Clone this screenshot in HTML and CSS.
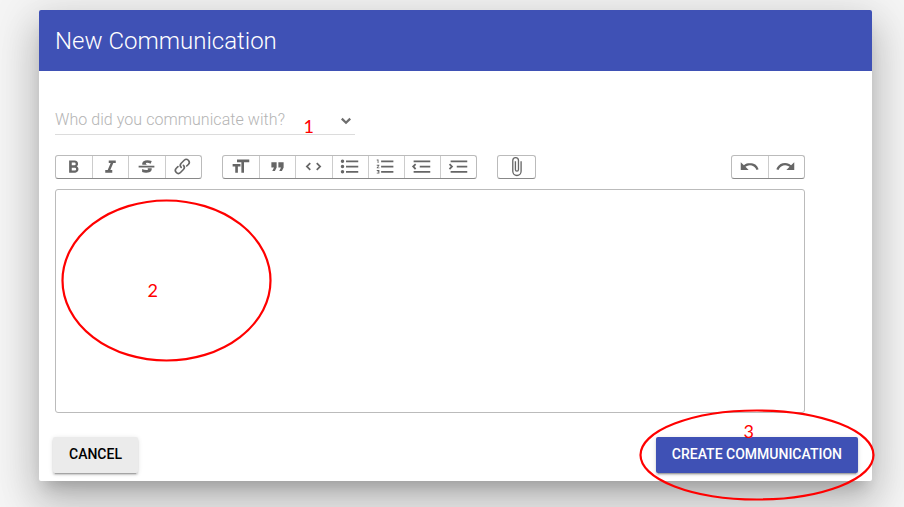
FILE: index.html
```html
<!DOCTYPE html>
<html lang="en">
<head>
<meta charset="utf-8">
<title>New Communication</title>
<link rel="stylesheet" href="styles.css">
</head>
<body>
<main class="dialog">
  <header class="header"><h1 class="title">New Communication</h1></header>
  <section class="content">
    <div class="select">
      <span class="placeholder">Who did you communicate with?</span>
      <svg class="chevron" viewBox="0 0 12 8"><path d="M1.8 1.6 6 5.7l4.200-4.100"/></svg>
    </div>
    <div class="toolbar">
      <div class="group">
        <button class="tool"><svg viewBox="0 0 24 24"><path d="M15.6 11.8c1-.7 1.6-1.8 1.6-2.8a4 4 0 0 0-4-4H7v14h7c2.1 0 3.700-1.700 3.700-3.800 0-1.500-.8-2.800-2.100-3.400zM10 7.500h3a1.500 1.500 0 1 1 0 3h-3v-3zm3.500 9H10v-3h3.500a1.500 1.500 0 1 1 0 3z"/></svg></button>
        <button class="tool"><svg viewBox="0 0 24 24"><path d="M10 5v3h2.200l-3.400 8H6v3h8v-3h-2.200l3.400-8H18V5h-8z"/></svg></button>
        <button class="tool"><svg viewBox="0 0 24 24"><path d="M12.730 14l.28.14c.26.15.45.3.57.44.12.14.18.3.18.5 0 .3-.15.56-.44.75-.3.2-.76.3-1.390.3A13.520 13.520 0 0 1 7 14.950v3.370a10.640 10.640 0 0 0 4.840.88c1.260 0 2.350-.19 3.280-.56.93-.37 1.640-.9 2.140-1.570s.74-1.450.74-2.320c0-.26-.02-.51-.06-.75h-5.210zm-5.500-4c-.08-.34-.12-.7-.12-1.100 0-1.290.52-2.300 1.580-3.020 1.050-.72 2.500-1.080 4.340-1.080 1.620 0 3.280.34 4.970 1l-1.300 2.930c-1.470-.6-2.730-.9-3.800-.9-.55 0-.96.08-1.200.26-.26.17-.38.38-.38.64 0 .27.16.52.48.74.17.12.53.3 1.050.53H7.230zM3 13h18v-2H3v2z"/></svg></button>
        <button class="tool"><svg viewBox="0 0 24 24"><path d="M9.880 13.700a4.300 4.300 0 0 1 0-6.070l3.370-3.370a4.260 4.260 0 0 1 6.070 0 4.300 4.300 0 0 1 0 6.060l-1.960 1.720a.91.91 0 1 1-1.300-1.300l1.970-1.710a2.460 2.460 0 0 0-3.480-3.480l-3.380 3.370a2.460 2.460 0 0 0 0 3.480.91.91 0 1 1-1.300 1.300z"/><path d="M4.250 19.460a4.300 4.300 0 0 1 0-6.070l1.930-1.900a.91.91 0 1 1 1.300 1.300l-1.930 1.900a2.460 2.460 0 0 0 3.480 3.480l3.370-3.380c.96-.96.96-2.520 0-3.480a.91.91 0 1 1 1.300-1.300 4.300 4.300 0 0 1 0 6.070l-3.380 3.380a4.260 4.260 0 0 1-6.070 0z"/></svg></button>
      </div>
      <div class="group">
        <button class="tool"><svg viewBox="0 0 24 24"><path d="M12 9v3H9v7H6v-7H3V9h9zM8 4h14v3h-6v12h-3V7H8V4z"/></svg></button>
        <button class="tool"><svg viewBox="0 0 24 24"><path d="M6 17h3l2-4V7H5v6h3zm8 0h3l2-4V7h-6v6h3z"/></svg></button>
        <button class="tool"><svg viewBox="0 0 24 24"><path d="M18.200 12L15 15.200l1.400 1.400L21 12l-4.600-4.600L15 8.800l3.200 3.200zM5.800 12L9 8.800 7.600 7.400 3 12l4.600 4.600L9 15.200 5.800 12z"/></svg></button>
        <button class="tool"><svg viewBox="0 0 24 24"><path d="M4 4a2 2 0 1 0 0 4 2 2 0 0 0 0-4zm0 6a2 2 0 1 0 0 4 2 2 0 0 0 0-4zm0 6a2 2 0 1 0 0 4 2 2 0 0 0 0-4zm4 3h14v-2H8v2zm0-6h14v-2H8v2zm0-8v2h14V5H8z"/></svg></button>
        <button class="tool"><svg viewBox="0 0 24 24"><path d="M2 17h2v.5H3v1h1v.5H2v1h3v-4H2v1zm1-9h1V4H2v1h1v3zm-1 3h1.800L2 13.100v.9h3v-1H3.200L5 10.900V10H2v1zm5-6v2h14V5H7zm0 14h14v-2H7v2zm0-6h14v-2H7v2z"/></svg></button>
        <button class="tool"><svg viewBox="0 0 24 24"><path d="M3 19h19v-2H3v2zm7-6h12v-2H10v2zm-8.300-.3l2.800 2.900L6 14.200 4 12l2-2-1.400-1.500L1 12l.7.7zM3 5v2h19V5H3z"/></svg></button>
        <button class="tool"><svg viewBox="0 0 24 24"><path d="M3 19h19v-2H3v2zm7-6h12v-2H10v2zm-6.900-1L1 14.200l1.400 1.400L6 12l-.7-.7-2.800-2.800L1 9.900 3.100 12zM3 5v2h19V5H3z"/></svg></button>
      </div>
      <div class="group">
        <button class="tool"><svg viewBox="0 0 24 24"><path d="M16.500 6v11.500a4 4 0 1 1-8 0V5a2.500 2.500 0 0 1 5 0v10.500a1 1 0 1 1-2 0V6H10v9.500a2.500 2.500 0 0 0 5 0V5a4 4 0 1 0-8 0v12.500a5.500 5.500 0 0 0 11 0V6h-1.500z"/></svg></button>
      </div>
      <div class="group history">
        <button class="tool"><svg viewBox="0 0 24 24"><path d="M12.500 8c-2.600 0-5 1-6.900 2.600L2 7v9h9l-3.600-3.600A8 8 0 0 1 20 16l2.400-.8a10.500 10.500 0 0 0-10-7.200z"/></svg></button>
        <button class="tool"><svg viewBox="0 0 24 24"><path d="M18.400 10.600a10.500 10.500 0 0 0-16.900 4.600L4 16a8 8 0 0 1 12.700-3.600L13 16h9V7l-3.600 3.600z"/></svg></button>
      </div>
    </div>
    <div class="editor" contenteditable="true"></div>
  </section>
  <footer class="actions">
    <button class="button">CANCEL</button>
    <button class="button primary">CREATE COMMUNICATION</button>
  </footer>
</main>
<svg class="annotations" viewBox="0 0 904 507">
  <ellipse cx="166.500" cy="280.500" rx="104" ry="80"/>
  <ellipse cx="757" cy="455" rx="116.500" ry="44.500"/>
  <text x="303.500" y="133">1</text>
  <text x="147.500" y="297">2</text>
  <text x="743.500" y="438">3</text>
</svg>
</body>
</html>
```
FILE: styles.css
```css
* { box-sizing: border-box; }

body {
  margin: 0;
  height: 507px;
  overflow: hidden;
  padding: 10px 32px 26px 39px;
  background: #f5f5f5;
  font-family: Roboto, sans-serif;
}

.dialog {
  height: 471px;
  display: flex;
  flex-direction: column;
  background: #fff;
  border-radius: 2px;
  box-shadow: 0 11px 15px -7px rgba(0, 0, 0, .2),
    0 24px 38px 3px rgba(0, 0, 0, .14),
    0 9px 46px 8px rgba(0, 0, 0, .12);
}

.header {
  height: 61px;
  padding: 0 16px;
  display: flex;
  align-items: center;
  background: #3f51b5;
  border-radius: 2px 2px 0 0;
}

.title {
  margin: 0;
  color: #fff;
  font-size: 24px;
  font-weight: 300;
  line-height: 32px;
}

.content { padding: 34px 67px 0 16px; }

.select {
  width: 300px;
  height: 30px;
  display: flex;
  align-items: center;
  justify-content: space-between;
  border-bottom: 1px solid #dcdcdc;
}

.placeholder {
  color: #b4b4b4;
  font-size: 16px;
  font-weight: 300;
  letter-spacing: .06px;
}

.chevron {
  width: 12px;
  height: 8px;
  margin: 2px 3px 0 0;
  fill: none;
  stroke: #6e6e6e;
  stroke-width: 2.300;
}

.toolbar {
  display: flex;
  margin-top: 20px;
}

.group {
  display: flex;
  height: 24px;
  margin-right: 20.200px;
  border: 1px solid #bbb;
  border-bottom-color: #888;
  border-radius: 3px;
}

.history { margin: 0 0 0 auto; }

.tool {
  width: 36.200px;
  height: 22px;
  padding: 0 1px 1px 0;
  display: flex;
  align-items: center;
  justify-content: center;
  border: 0;
  background: transparent;
}

.tool + .tool { border-left: 1px solid #ccc; }

.tool svg {
  width: 21px;
  height: 21px;
  fill: #666;
}

.editor {
  height: 224px;
  margin-top: 10px;
  border: 1px solid #bbb;
  border-radius: 3px;
}

.actions {
  display: flex;
  justify-content: space-between;
  padding: 24px 14px 0 14px;
}

.button {
  height: 36px;
  padding: 0 16px 1px;
  border: 0;
  border-radius: 2px;
  background: #ebebeb;
  color: #000;
  font: 500 14px/35px Roboto, sans-serif;
  box-shadow: 0 3px 1px -2px rgba(0, 0, 0, .2),
    0 2px 2px 0 rgba(0, 0, 0, .14),
    0 1px 5px 0 rgba(0, 0, 0, .12);
}

.primary {
  background: #3f51b5;
  color: #fff;
}

.annotations {
  position: absolute;
  top: 0;
  left: 0;
  width: 904px;
  height: 507px;
  pointer-events: none;
}

.annotations ellipse {
  fill: none;
  stroke: #f00;
  stroke-width: 2.200;
}

.annotations text {
  fill: #f00;
  font: 18px Lato, sans-serif;
}
```
